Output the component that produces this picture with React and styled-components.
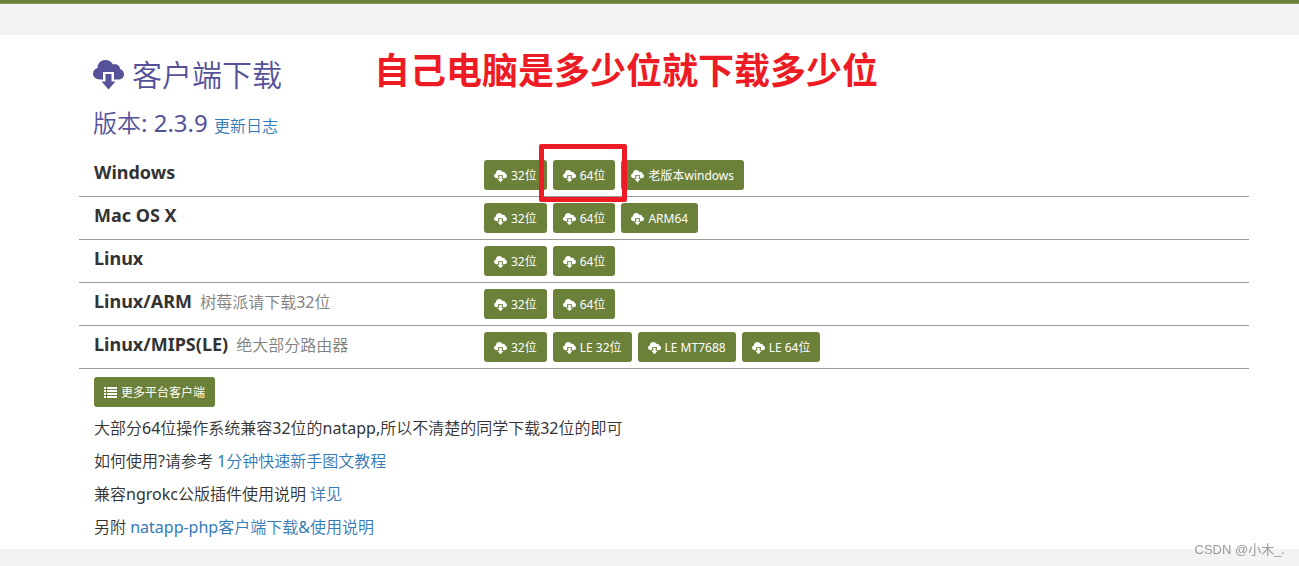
import styled, { createGlobalStyle } from 'styled-components';

const GlobalStyle = createGlobalStyle`
  * {
    box-sizing: border-box;
  }

  body {
    margin: 0;
    background: #f3f3f3;
    color: #333;
    font-family: 'Noto Sans', 'Noto Sans CJK SC DemiLight', 'Noto Sans CJK SC', sans-serif;
    font-size: 16px;
    line-height: 23px;
  }
`;

const TopBar = styled.div`
  height: 4px;
  background: #6b8039;
  border-bottom: 1px solid #86995a;
`;

const Main = styled.main`
  position: relative;
  margin-top: 31px;
  padding: 20px 50px 10px 79px;
  background: #fff;
`;

const Heading = styled.div`
  padding: 0 14px;
  color: #555299;
`;

const Title = styled.h2`
  display: flex;
  align-items: center;
  gap: 8px;
  margin: 0;
  font-size: 30px;
  font-weight: 400;
  line-height: 40px;
`;

const Version = styled.h3`
  margin: 11px 0;
  font-size: 24px;
  font-weight: 400;
  line-height: 33px;
`;

const Link = styled.a`
  color: #337ab7;
  font-size: 16px;
  text-decoration: none;
`;

const Row = styled.div`
  display: flex;
  padding: 6px 0;
  border-bottom: 1px solid #999;
`;

const Platform = styled.div`
  width: 33.3333%;
  padding: 0 15px;
  line-height: 24px;
`;

const Name = styled.strong`
  margin-right: 4px;
  font-size: 18px;
  font-weight: 700;
`;

const Note = styled.span`
  color: #808080;
`;

const Downloads = styled.div`
  position: relative;
  display: flex;
  flex: 1;
  gap: 6px;
  padding: 0 15px;
`;

const Button = styled.button`
  display: flex;
  align-items: center;
  gap: 4px;
  height: 30px;
  padding: 2px 10px 0;
  border: 0;
  border-radius: 3px;
  background: #6b8039;
  color: #fff;
  font-family: 'Noto Sans', 'Noto Sans CJK SC', sans-serif;
  font-size: 12px;
  line-height: 18px;
  white-space: nowrap;
  cursor: pointer;
`;

const Info = styled.div`
  padding: 8px 15px 0;
`;

const Text = styled.p`
  margin: 10px 0 0;
`;

const Callout = styled.div`
  position: absolute;
  top: 13px;
  left: 374px;
  color: #ed1c24;
  font-family: 'Noto Sans CJK SC', sans-serif;
  font-size: 36px;
  font-weight: 700;
  line-height: 40px;
  white-space: nowrap;
`;

const Marker = styled.div`
  position: absolute;
  top: -16px;
  left: 70px;
  width: 88px;
  height: 58px;
  border: 5px solid #ed1c24;
  border-radius: 2px;
  pointer-events: none;
`;

const Watermark = styled.div`
  position: fixed;
  right: 14px;
  bottom: 6px;
  color: #999;
  font-family: 'Liberation Sans', 'Noto Sans CJK SC', sans-serif;
  font-size: 13px;
  line-height: 20px;
`;

const platforms = [
  { name: 'Windows', files: ['32位', '64位', '老版本windows'], marked: true },
  { name: 'Mac OS X', files: ['32位', '64位', 'ARM64'] },
  { name: 'Linux', files: ['32位', '64位'] },
  { name: 'Linux/ARM', note: '树莓派请下载32位', files: ['32位', '64位'] },
  { name: 'Linux/MIPS(LE)', note: '绝大部分路由器', files: ['32位', 'LE 32位', 'LE MT7688', 'LE 64位'] },
];

const CloudDownload = ({ size }) => (
  <svg width={size} height={size} viewBox="0 0 31 31" fill="currentColor" aria-hidden="true">
    <path d="M7 19.500C3 19.500 0 17 0 13.800C0 11 2 8.800 4.600 8.100C4.200 3.500 8 0 12.500 0C16 0 18.700 1.900 20 4.500C24 3.700 27 6 27 9C29.500 9.700 31 11.700 31 14.200C31 17.500 28.500 19.500 25 19.500H21V12H10V19.500Z" />
    <path d="M12.500 14H18.500V21.500H22.500L15.500 29.500L8.500 21.500H12.500Z" />
  </svg>
);

const ListIcon = () => (
  <svg width="13" height="12" viewBox="0 0 13 12" fill="currentColor" aria-hidden="true">
    <path d="M0 0h2v2H0zM3 0h10v2H3zM0 3h2v2H0zM3 3h10v2H3zM0 6h2v2H0zM3 6h10v2H3zM0 9h2v2H0zM3 9h10v2H3z" />
  </svg>
);

const App = () => {
  return (
    <>
      <GlobalStyle />
      <TopBar />
      <Main>
        <Heading>
          <Title>
            <CloudDownload size={31} />
            客户端下载
          </Title>
          <Version>
            版本: 2.3.9 <Link href="#log">更新日志</Link>
          </Version>
        </Heading>
        <Callout>自己电脑是多少位就下载多少位</Callout>
        {platforms.map((item) => (
          <Row key={item.name}>
            <Platform>
              <Name>{item.name}</Name> {item.note && <Note>{item.note}</Note>}
            </Platform>
            <Downloads>
              {item.files.map((file) => (
                <Button key={file} type="button">
                  <CloudDownload size={13} />
                  {file}
                </Button>
              ))}
              {item.marked && <Marker />}
            </Downloads>
          </Row>
        ))}
        <Info>
          <Button type="button">
            <ListIcon />
            更多平台客户端
          </Button>
          <Text>大部分64位操作系统兼容32位的natapp,所以不清楚的同学下载32位的即可</Text>
          <Text>
            如何使用?请参考 <Link href="#guide">1分钟快速新手图文教程</Link>
          </Text>
          <Text>
            兼容ngrokc公版插件使用说明 <Link href="#ngrokc">详见</Link>
          </Text>
          <Text>
            另附 <Link href="#php">natapp-php客户端下载&amp;使用说明</Link>
          </Text>
        </Info>
      </Main>
      <Watermark>CSDN @小木_.</Watermark>
    </>
  )
};

export default App;
